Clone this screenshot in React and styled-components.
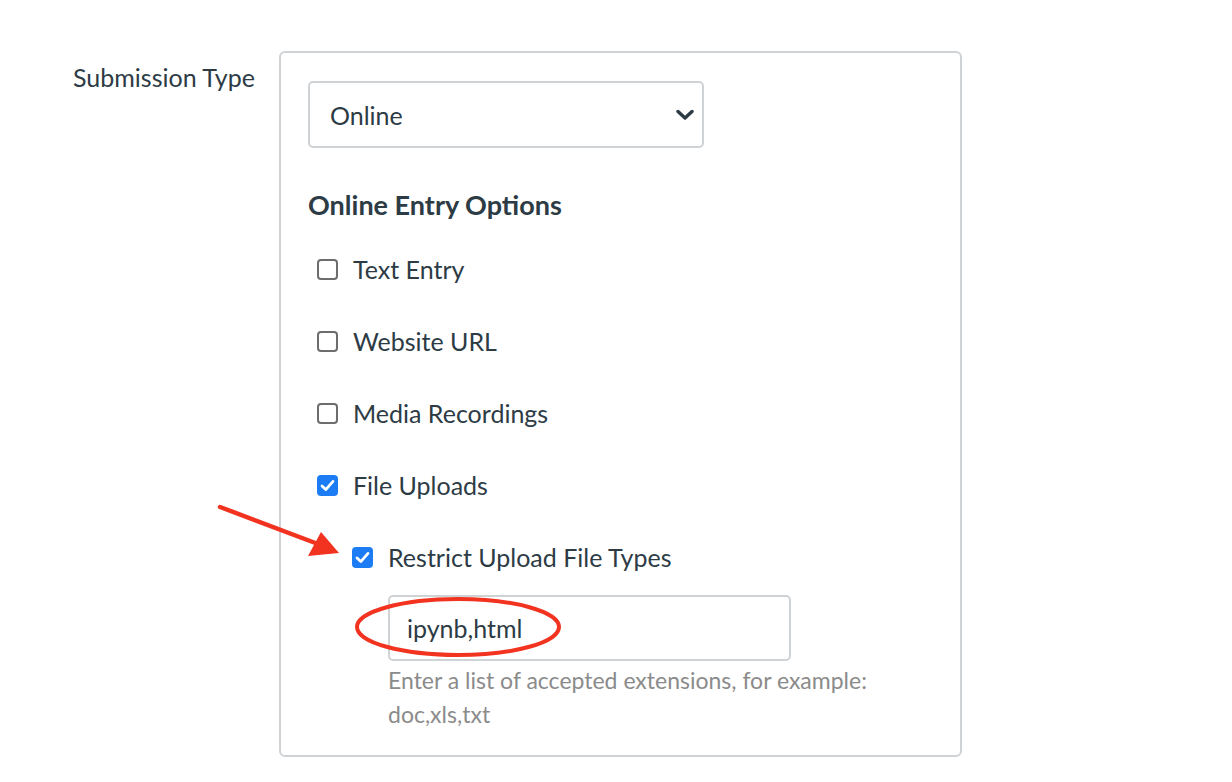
import React from 'react'
import styled, { createGlobalStyle } from 'styled-components'

const Global = createGlobalStyle`
    body {
        margin: 0;
        background: #fff;
        font-family: Lato, "Open Sans", sans-serif;
        color: #2d3b45;
    }
`

const Page = styled.div`
    position: relative;
    width: 1232px;
    height: 782px;
    padding-top: 51px;
    box-sizing: border-box;
    display: flex;
    align-items: flex-start;
`

const Label = styled.div`
    width: 279px;
    padding-left: 73px;
    padding-top: 10px;
    box-sizing: border-box;
    font-size: 25px;
    line-height: 32px;
`

const Panel = styled.div`
    width: 683px;
    height: 706px;
    box-sizing: border-box;
    border: 2px solid #cfd3d6;
    border-radius: 6px;
    padding: 28px 27px 0;
`

const Select = styled.div`
    width: 396px;
    height: 67px;
    box-sizing: border-box;
    border: 2px solid #cfd3d6;
    border-radius: 5px;
    display: flex;
    align-items: center;
    justify-content: space-between;
    padding: 0 8px 0 20px;
    font-size: 25px;
`

const Heading = styled.h3`
    margin: 40px 0 12px;
    font-size: 27px;
    line-height: 33px;
    font-weight: 700;
`

const Option = styled.label`
    height: 72px;
    display: flex;
    align-items: center;
    padding-left: ${p => (p.$nested ? 44 : 9)}px;
    font-size: 25px;
`

const Box = styled.span`
    width: 21px;
    height: 21px;
    box-sizing: border-box;
    border-radius: 4px;
    margin-right: 15px;
    display: flex;
    align-items: center;
    justify-content: center;
    border: ${p => (p.$checked ? 'none' : '2px solid #6d6d6d')};
    background: ${p => (p.$checked ? '#1b7cf4' : '#fff')};
`

const Field = styled.div`
    margin: 2px 0 0 80px;
`

const Input = styled.div`
    width: 403px;
    height: 66px;
    box-sizing: border-box;
    border: 2px solid #cfd3d6;
    border-radius: 5px;
    display: flex;
    align-items: center;
    padding-left: 17px;
    font-size: 25px;
`

const Help = styled.p`
    margin: 2px 0 0;
    width: 500px;
    font-size: 23px;
    line-height: 34px;
    color: #8b8b8b;
`

const Annotation = styled.svg`
    position: absolute;
    left: 0;
    top: 0;
    pointer-events: none;
`

const Chevron = () => (
    <svg width="18" height="12" viewBox="0 0 18 12">
        <path d="M2 2.5 L9 9 L16 2.5" fill="none" stroke="#2d3b45" strokeWidth="3.4" strokeLinecap="round" strokeLinejoin="round" />
    </svg>
)

const Check = () => (
    <svg width="15" height="13" viewBox="0 0 15 13">
        <path d="M2 7 L5.8 10.6 L13 2.4" fill="none" stroke="#fff" strokeWidth="2.8" strokeLinecap="round" strokeLinejoin="round" />
    </svg>
)

const CheckOption = ({ label, checked, nested }) => (
    <Option $nested={nested}>
        <Box $checked={checked}>{checked && <Check />}</Box>
        {label}
    </Option>
)

const App = () => {
    return (
        <Page>
            <Global />
            <Label>Submission Type</Label>
            <Panel>
                <Select>
                    Online
                    <Chevron />
                </Select>
                <Heading>Online Entry Options</Heading>
                <CheckOption label="Text Entry" />
                <CheckOption label="Website URL" />
                <CheckOption label="Media Recordings" />
                <CheckOption label="File Uploads" checked />
                <CheckOption label="Restrict Upload File Types" checked nested />
                <Field>
                    <Input>ipynb,html</Input>
                    <Help>Enter a list of accepted extensions, for example: doc,xls,txt</Help>
                </Field>
            </Panel>
            <Annotation width="1232" height="782" viewBox="0 0 1232 782">
                <line x1="220" y1="507" x2="318" y2="544" stroke="#f23320" strokeWidth="4.5" strokeLinecap="round" />
                <polygon points="339,553 308,556 321,532" fill="#f23320" />
                <ellipse cx="458" cy="627" rx="101" ry="28" fill="none" stroke="#f23320" strokeWidth="4" />
            </Annotation>
        </Page>
    )
}

export default App
